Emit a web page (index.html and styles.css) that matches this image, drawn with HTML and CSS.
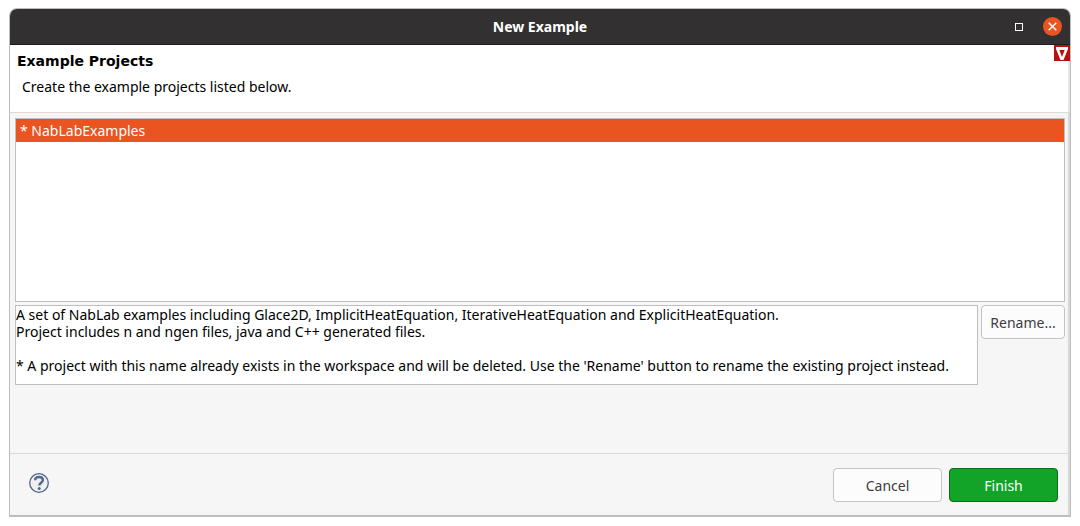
FILE: index.html
```html
<!DOCTYPE html>
<html lang="en">
<head>
<meta charset="utf-8">
<title>New Example</title>
<link rel="stylesheet" href="styles.css">
</head>
<body>
<div class="window" role="dialog" aria-labelledby="window-title">
  <header class="titlebar">
    <h1 class="window-title" id="window-title">New Example</h1>
    <div class="window-controls">
      <button class="window-button" type="button" aria-label="Maximize">
        <svg width="8" height="8" viewBox="0 0 8 8"><rect x=".5" y=".5" width="7" height="7" fill="none" stroke="#fff"/></svg>
      </button>
      <button class="window-button close" type="button" aria-label="Close">
        <svg width="9" height="9" viewBox="0 0 9 9"><path d="M.7.7l7.600 7.600M8.300.7L.7 8.300" stroke="#fff" stroke-width="1.400"/></svg>
      </button>
    </div>
  </header>
  <section class="banner">
    <div class="banner-text">
      <h2 class="banner-title">Example Projects</h2>
      <p class="banner-message">Create the example projects listed below.</p>
    </div>
    <svg class="logo" width="16" height="16" viewBox="0 0 16 16" aria-hidden="true">
      <path fill="#b80f12" d="M0 0h16v16H0z"/>
      <path fill="#fff" fill-rule="evenodd" d="M2 2h12v2L9.500 15h-3L2 4zM5.300 5L8 12 10.700 5z"/>
    </svg>
  </section>
  <main class="content">
    <select class="projects" size="8" aria-label="Example projects">
      <option selected>* NabLabExamples</option>
    </select>
    <div class="details">
      <textarea class="description" readonly aria-label="Description">A set of NabLab examples including Glace2D, ImplicitHeatEquation, IterativeHeatEquation and ExplicitHeatEquation.
Project includes n and ngen files, java and C++ generated files.

* A project with this name already exists in the workspace and will be deleted. Use the 'Rename' button to rename the existing project instead.</textarea>
      <button class="button rename" type="button">Rename...</button>
    </div>
  </main>
  <footer class="footer">
    <button class="help" type="button" aria-label="Help">
      <svg width="20" height="20" viewBox="0 0 20 20" fill="none">
        <circle cx="10" cy="10" r="9.300" fill="#f0f0f0" stroke="#526789" stroke-width="1.300"/>
        <path d="M6.300 7.200V5.800C7 4.500 8.500 4 10 4c2.400 0 3.900 1.200 3.900 3.100 0 2.600-3.600 2.600-3.600 5.400" stroke="#526789" stroke-width="2.400"/>
        <circle cx="10.200" cy="15.400" r="1.500" fill="#526789"/>
      </svg>
    </button>
    <div class="actions">
      <button class="button wide" type="button">Cancel</button>
      <button class="button wide primary" type="button">Finish</button>
    </div>
  </footer>
</div>
</body>
</html>
```
FILE: styles.css
```css
* {
  box-sizing: border-box;
}

body {
  margin: 0;
  padding: 8px 9px 9px;
  height: 100vh;
  background: #fff;
  color: #000;
  font: 14px/17px "Noto Sans", sans-serif;
}

button,
select,
textarea {
  margin: 0;
  font: inherit;
}

.window {
  display: flex;
  flex-direction: column;
  height: 100%;
  overflow: hidden;
  border: 1px solid #bdbdbd;
  border-bottom-width: 2px;
  border-radius: 8px 8px 0 0;
  background: #f6f6f6;
  box-shadow: inset -2px 0 1px #d8d8d8;
}

.titlebar {
  display: grid;
  grid-template-columns: 1fr auto 1fr;
  align-items: center;
  height: 36px;
  flex: none;
  padding: 0 8px;
  border-bottom: 1px solid #1e1e1e;
  background: #323031;
  color: #fff;
}

.window-title {
  grid-column: 2;
  margin: 0;
  font-size: 14px;
  font-weight: 700;
}

.window-controls {
  display: flex;
  gap: 15px;
  justify-content: flex-end;
}

.window-button {
  display: grid;
  place-items: center;
  width: 19px;
  height: 19px;
  padding: 0;
  border: 0;
  border-radius: 50%;
  background: none;
}

.close {
  background: #e95420;
}

.banner {
  display: flex;
  justify-content: space-between;
  flex: none;
  height: 68px;
  border-bottom: 1px solid #dadada;
  background: #fff;
  box-shadow: inset -2px 0 1px #e4e4e4;
}

.banner-text {
  padding: 8px 7px;
}

.banner-title {
  margin: 0 0 8px;
  font: bold 14px/17px "DejaVu Sans", sans-serif;
}

.banner-message {
  margin: 0;
  padding-left: 5px;
}

.logo {
  flex: none;
}

.content {
  display: flex;
  flex: 1;
  flex-direction: column;
  gap: 3px;
  padding: 5px;
}

.projects {
  height: 184px;
  padding: 0;
  overflow: hidden;
  border: 1px solid #bfbfbf;
  border-radius: 0;
  outline: 0;
  background: #fff;
}

.projects option {
  padding: 2px 4px;
}

.projects option:checked {
  background: #e95420 linear-gradient(#e95420, #e95420);
  color: #fff;
}

.details {
  display: flex;
  align-items: flex-start;
  gap: 3px;
}

.description {
  flex: 1;
  height: 80px;
  padding: 0;
  overflow: hidden;
  border: 1px solid #bfbfbf;
  outline: 0;
  resize: none;
  background: #fff;
  color: #000;
}

.button {
  height: 34px;
  padding: 0 8px;
  border: 1px solid #c4c4c4;
  border-radius: 4px;
  background: #fcfcfc;
  color: #3d3d3d;
}

.rename {
  width: 84px;
}

.wide {
  width: 109px;
}

.primary {
  border-color: #0b6e1a;
  background: #12a329;
  color: #fff;
}

.footer {
  display: flex;
  align-items: flex-start;
  justify-content: space-between;
  flex: none;
  height: 62px;
  padding: 14px 12px 14px 14px;
  border-top: 1px solid #dadada;
}

.help {
  display: grid;
  padding: 5px;
  border: 0;
  background: none;
}

.actions {
  display: flex;
  gap: 7px;
}
```
